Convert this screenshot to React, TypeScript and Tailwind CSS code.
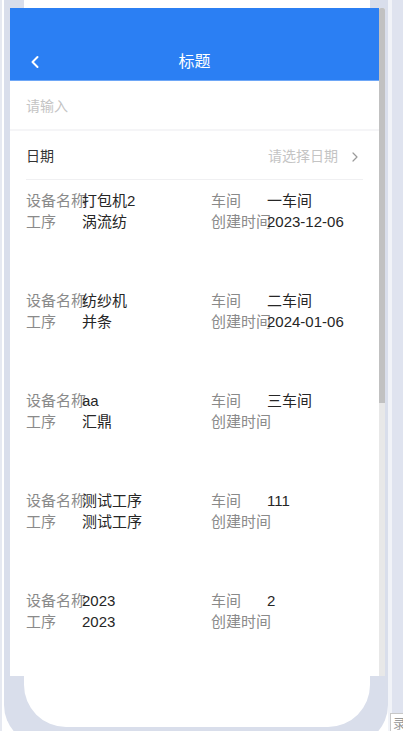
import { ChevronLeft, ChevronRight } from "lucide-react";

type Device = {
	name: string;
	workshop: string;
	process: string;
	createdAt: string;
};

const DEVICES: Device[] = [
	{ name: "打包机2", workshop: "一车间", process: "涡流纺", createdAt: "2023-12-06" },
	{ name: "纺纱机", workshop: "二车间", process: "并条", createdAt: "2024-01-06" },
	{ name: "aa", workshop: "三车间", process: "汇鼎", createdAt: "" },
	{ name: "测试工序", workshop: "111", process: "测试工序", createdAt: "" },
	{ name: "2023", workshop: "2", process: "2023", createdAt: "" },
];

function Field({ label, value }: { label: string; value: string }) {
	return (
		<div className="grid grid-cols-[56px_1fr] leading-[21px]">
			<span className="whitespace-nowrap text-[#8a8a8a]">{label}</span>
			<span className="whitespace-nowrap text-[#262626]">{value}</span>
		</div>
	);
}

function DeviceItem({ item }: { item: Device }) {
	return (
		<div className="grid h-[100px] shrink-0 grid-cols-[185px_1fr] content-start px-4 pt-[10px] text-[15px]">
			<Field label="设备名称" value={item.name} />
			<Field label="车间" value={item.workshop} />
			<Field label="工序" value={item.process} />
			<Field label="创建时间" value={item.createdAt} />
		</div>
	);
}

function DevicePanel() {
	return (
		<div className="absolute left-[6px] top-[8px] flex h-[668px] w-[375px] bg-white">
			<div className="flex w-[369px] flex-col overflow-hidden">
				{/* Nav bar */}
				<div className="flex h-[73px] shrink-0 items-end border-b border-[#6ea7f7] bg-[#2b7ff3]">
					<div className="relative flex h-[37px] w-full items-center justify-center">
						<ChevronLeft className="absolute left-[15px] top-[9px] h-[20px] w-[20px] text-white" strokeWidth={2.4} />
						<span className="text-[16px] text-white">标题</span>
					</div>
				</div>

				{/* Search */}
				<div className="flex h-[50px] shrink-0 items-center border-b-2 border-[#f5f5f7] px-4 pt-[3px] text-[14px] text-[#c4c4c4]">
					请输入
				</div>

				{/* Date picker */}
				<div className="mx-4 flex h-[49px] shrink-0 items-center justify-between border-b border-[#f0f0f2] pt-[3px] text-[14px]">
					<span className="text-[#333]">日期</span>
					<div className="flex items-center gap-[9px]">
						<span className="text-[#c4c4c4]">请选择日期</span>
						<ChevronRight className="h-[16px] w-[16px] text-[#9a9a9a]" strokeWidth={1.8} />
					</div>
				</div>

				{/* List */}
				<div className="flex flex-col">
					{DEVICES.map((d, i) => (
						<DeviceItem key={i} item={d} />
					))}
				</div>
			</div>

			{/* Scrollbar */}
			<div className="flex w-[6px] flex-col bg-[#e8e8e8]">
				<div className="h-[395px] rounded-t-[2px] bg-[#c1c1c1]" />
			</div>
		</div>
	);
}

export default function App() {
	return (
		<div className="relative flex h-[731px] w-[403px] overflow-hidden bg-white font-['Liberation_Sans','Noto_Sans_CJK_SC',sans-serif]">
			{/* left page edge */}
			<div className="w-[2px] bg-[#e6e9f1]" />
			<div className="w-[2px] bg-white" />

			{/* phone shell */}
			<div className="relative h-[745px] w-[384px] rounded-b-[40px] bg-[#d9deeb] px-[20px]">
				<div className="h-[727px] w-[346px] rounded-b-[42px] bg-white" />
				<DevicePanel />
			</div>

			{/* right page edge */}
			<div className="w-[4px] bg-[#f1f3f8]" />
			<div className="relative flex-1 bg-[#dfe3ef]">
				<div className="absolute left-[-2px] top-[713px] h-[22px] w-[20px] overflow-hidden border border-[#c8c8c8] bg-white pl-[2px] text-[13px] leading-[20px] text-[#999]">
					录
				</div>
			</div>
		</div>
	);
}
